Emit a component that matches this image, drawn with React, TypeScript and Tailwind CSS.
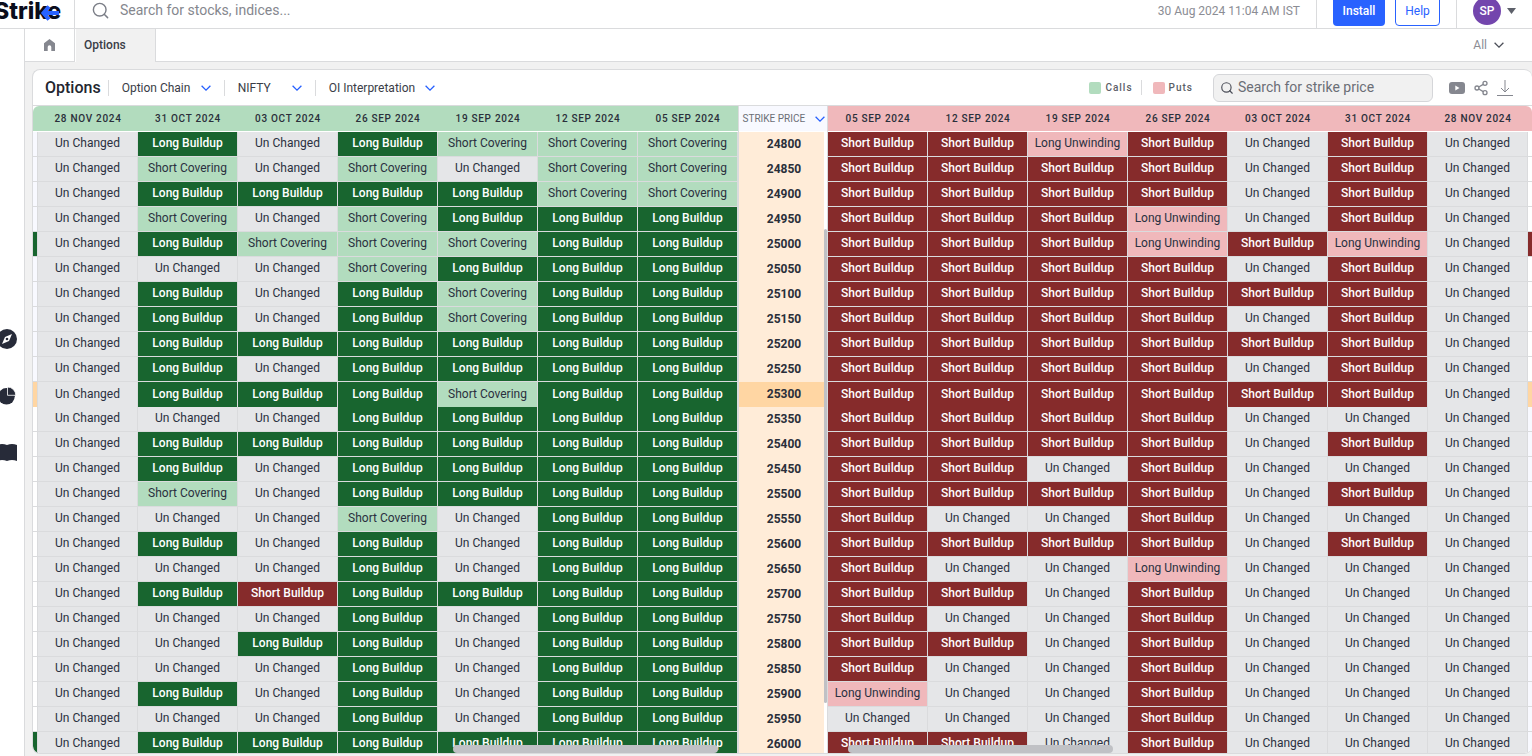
import { useState } from "react";
import { Search, Share2 } from "lucide-react";

type Side = "calls" | "puts";

const LABELS: Record<string, string> = {
  U: "Un Changed",
  L: "Long Buildup",
  S: "Short Buildup",
  C: "Short Covering",
  W: "Long Unwinding",
  _: "",
};

// the outermost expiry is scrolled away, only its edge shows
const CALL_DATES = ["", "28 NOV 2024", "31 OCT 2024", "03 OCT 2024", "26 SEP 2024", "19 SEP 2024", "12 SEP 2024", "05 SEP 2024"];
const PUT_DATES = [...CALL_DATES].reverse();

const ATM = 25300;

// one letter per expiry, see LABELS
const ROWS: { strike: number; calls: string; puts: string }[] = [
  { strike: 24800, calls: "_ULULCCC", puts: "SSWSUSU_" },
  { strike: 24850, calls: "_UCUCUCC", puts: "SSSSUSU_" },
  { strike: 24900, calls: "_ULLLLCC", puts: "SSSSUSU_" },
  { strike: 24950, calls: "_UCUCLLL", puts: "SSSWUSU_" },
  { strike: 25000, calls: "LULCCCLL", puts: "SSSWSWUS" },
  { strike: 25050, calls: "_UUUCLLL", puts: "SSSSUSU_" },
  { strike: 25100, calls: "_ULULCLL", puts: "SSSSSSU_" },
  { strike: 25150, calls: "_ULULCLL", puts: "SSSSUSU_" },
  { strike: 25200, calls: "_ULLLLLL", puts: "SSSSSSU_" },
  { strike: 25250, calls: "_ULULLLL", puts: "SSSSUSU_" },
  { strike: 25300, calls: "_ULLLCLL", puts: "SSSSSSU_" },
  { strike: 25350, calls: "_UUULLLL", puts: "SSSSUUU_" },
  { strike: 25400, calls: "_ULLLLLL", puts: "SSSSUSU_" },
  { strike: 25450, calls: "_ULULLLL", puts: "SSUSUUU_" },
  { strike: 25500, calls: "_UCULLLL", puts: "SSSSUSU_" },
  { strike: 25550, calls: "_UUUCULL", puts: "SUUSUUU_" },
  { strike: 25600, calls: "_ULULULL", puts: "SSSSUSU_" },
  { strike: 25650, calls: "_UUULULL", puts: "SUUWUUU_" },
  { strike: 25700, calls: "_ULSLLLL", puts: "SSUSUUU_" },
  { strike: 25750, calls: "_UUULULL", puts: "SUUSUUU_" },
  { strike: 25800, calls: "_UULLULL", puts: "SSUSUUU_" },
  { strike: 25850, calls: "_UUULULL", puts: "SUUSUUU_" },
  { strike: 25900, calls: "_ULULULL", puts: "WUUSUUU_" },
  { strike: 25950, calls: "_UUULULL", puts: "UUUSUUU_" },
  { strike: 26000, calls: "LULLLLLL", puts: "SSUSUUU_" },
];

function cellColor(code: string, strike: number, side: Side) {
  if (code === "L") return "bg-[#18652f] text-white font-medium";
  if (code === "S") return "bg-[#862b2b] text-white font-medium";
  if (code === "C") return "bg-[#b2dcbe] text-[#2a3040]";
  if (code === "W") return "bg-[#f0b8bb] text-[#2a3040]";
  if (code === "U") return "bg-[#e5e6e8] text-[#2a3040]";
  if (strike === ATM) return "bg-[#ffd6a3]";
  const itm = side === "calls" ? strike < ATM : strike > ATM;
  return itm ? "bg-[#f8f9ff]" : "bg-white";
}

function Chevron({ className }: { className: string }) {
  return (
    <svg width="10" height="6" viewBox="0 0 10 6" fill="none" stroke="currentColor" strokeWidth="1.300" className={`shrink-0 ${className}`}>
      <path d="M.6.7L5 5.100 9.400.7" />
    </svg>
  );
}

function OptionTable({ side }: { side: Side }) {
  const dates = side === "calls" ? CALL_DATES : PUT_DATES;
  const head = side === "calls" ? "bg-[#b2dcbe]" : "bg-[#f0b8bb]";
  return (
    <div className={`relative flex min-w-0 flex-1 overflow-hidden ${side === "calls" ? "justify-end rounded-l-md" : "justify-start rounded-tr-md"}`}>
      <table className="w-[800px] shrink-0 table-fixed border-separate border-spacing-0 self-start text-center">
        <thead>
          <tr>
            {dates.map((d, i) => (
              <th key={i} className={`h-[26px] border-b border-white p-0 pl-px text-[10px] font-medium leading-4 tracking-[0.07em] text-[#2a2f3a] ${head}`}>
                {d}
              </th>
            ))}
          </tr>
        </thead>
        <tbody>
          {ROWS.map((row) => (
            <tr key={row.strike}>
              {row[side].split("").map((code, i) => (
                <td
                  key={i}
                  className={`h-[25px] border-r border-[#dadbdd] p-0 pb-0.5 pl-px text-[12px] leading-4 ${row.strike === ATM ? "" : "border-b"} ${cellColor(code, row.strike, side)}`}
                >
                  {dates[i] && LABELS[code]}
                </td>
              ))}
            </tr>
          ))}
        </tbody>
      </table>
      <div className={`absolute bottom-0 h-2 w-[265px] rounded-full bg-[#c0c1c5] ${side === "calls" ? "right-5" : "left-5"}`} />
    </div>
  );
}

function StrikeColumn() {
  return (
    <div className="relative w-[90px] shrink-0 overflow-hidden border-x border-[#dadbdd] bg-white">
      <table className="w-full table-fixed border-separate border-spacing-0 text-center">
        <thead>
          <tr>
            <th className="h-[26px] border-b border-white bg-[#f8f9ff] p-0 font-normal">
              <button className="flex w-full items-center justify-between pl-1 pr-0.5 text-[10px] leading-4 text-[#6b6e76]">
                STRIKE PRICE
                <Chevron className="text-[#2962ff]" />
              </button>
            </th>
          </tr>
        </thead>
        <tbody>
          {ROWS.map(({ strike }) => (
            <tr key={strike}>
              <td className="h-[25px] p-0 pr-[3px]">
                <div className={`h-[25px] pl-1.5 text-[12px] font-bold leading-6 text-[#2a2f3a] ${strike === ATM ? "bg-[#ffd6a3]" : "bg-[#ffecd8]"}`}>
                  {strike}
                </div>
              </td>
            </tr>
          ))}
        </tbody>
      </table>
      <div className="absolute right-0 top-[123px] h-[474px] w-[3px] rounded-full bg-[#c0c1c5]" />
    </div>
  );
}

function Logo() {
  return (
    <a href="#" aria-label="Strike" className="flex w-[75px] shrink-0 items-center self-stretch overflow-hidden border-r border-[#dadbdd]">
      <svg width="66" height="30" viewBox="0 0 66 30" className="shrink-0">
        <text x="-6" y="23" fontFamily="Inter" fontSize="23" fontWeight="800" fill="#0b0d1c">
          Strike
        </text>
        <path d="M44 17h15M49 10.500L43.500 17l5.500 6.500" fill="none" stroke="#2962ff" strokeWidth="4" />
      </svg>
    </a>
  );
}

function Header() {
  return (
    <header className="-mt-1.5 flex h-[35px] shrink-0 items-center border-b border-[#dadbdd] bg-white">
      <Logo />
      <label className="flex flex-1 items-center gap-2.5 pb-0.5 pl-4">
        <Search className="size-[19px] text-[#7b7e87]" strokeWidth={1.8} />
        <input className="w-80 text-[14px] leading-5 outline-none placeholder:text-[#85878e]" aria-label="Search" placeholder="Search for stocks, indices..." />
      </label>
      <span className="pr-4 text-[12px] text-[#8b8d94]">30 Aug 2024 11:04 AM IST</span>
      <div className="flex items-center gap-2.5 self-stretch border-x border-[#dadbdd] px-4">
        <button className="h-[30px] w-[52px] rounded bg-[#2962ff] text-[12px] font-medium text-white">Install</button>
        <button className="h-[30px] w-[45px] rounded border border-[#2962ff] text-[12px] text-[#2962ff]">Help</button>
      </div>
      <button className="flex items-center gap-1.5 pl-4 pr-4">
        <span className="flex size-7 items-center justify-center rounded-full bg-[#7346ad] text-[12px] font-medium text-white">SP</span>
        <svg width="9" height="6" viewBox="0 0 9 6" fill="#5d606a">
          <path d="M0 0h9L4.500 6z" />
        </svg>
      </button>
    </header>
  );
}

function Sidebar() {
  return (
    <nav className="flex w-[25px] shrink-0 flex-col gap-[37px] overflow-hidden border-r border-[#dadbdd] bg-white pt-[300px]">
      <a href="#" aria-label="Explore" className="-ml-[3px]">
        <svg width="20" height="20" viewBox="0 0 20 20">
          <circle cx="10" cy="10" r="10" fill="#272b39" />
          <path d="M15 5l-3 7-7 3 3-7z" fill="#fff" />
          <circle cx="10" cy="10" r="1.300" fill="#272b39" />
        </svg>
      </a>
      <a href="#" aria-label="Portfolio" className="-ml-[3px]">
        <svg width="20" height="20" viewBox="0 0 20 20" fill="#272b39">
          <circle cx="9.500" cy="10.300" r="8.300" />
          <path d="M10.500 1A8.300 8.300 0 0 1 18.800 9.300H10.500z" stroke="#fff" strokeWidth="0.800" />
        </svg>
      </a>
      <a href="#" aria-label="Learn" className="-ml-[3px]">
        <svg width="20" height="20" viewBox="0 0 20 20" fill="#272b39">
          <path d="M0 2Q5 0 10 2Q15 0 20 2V18Q15 16 10 18Q5 16 0 18z" />
        </svg>
      </a>
    </nav>
  );
}

function TabBar() {
  return (
    <div className="flex h-[33px] shrink-0 bg-white">
      <a href="#" aria-label="Home" className="flex w-[50px] items-center justify-center border-b border-r border-[#dadbdd]">
        <svg width="11" height="12" viewBox="0 0 11 12" fill="#85878f">
          <path d="M5.500 0L11 4.300V12H7.300V8a1.800 1.800 0 0 0-3.600 0v4H0V4.300z" />
        </svg>
      </a>
      <button className="ml-px w-20 border-r border-[#dadbdd] bg-[#f1f1f1] pb-0.5 pl-2 text-left text-[12px] font-medium text-[#3a3d47]">Options</button>
      <div className="flex flex-1 items-center justify-end border-b border-[#dadbdd] pr-7">
        <button className="flex items-center gap-[7px] text-[12px] text-[#8b8d94]">
          All
          <Chevron className="text-[#4c4f59]" />
        </button>
      </div>
    </div>
  );
}

function Dropdown({ label, width }: { label: string; width: string }) {
  return (
    <button className={`flex h-4 items-center justify-between border-l border-[#dadbdd] pl-[13px] text-[12px] text-[#3a3d47] ${width}`}>
      {label}
      <Chevron className="text-[#2962ff]" />
    </button>
  );
}

function Toolbar() {
  const [query, setQuery] = useState("");
  return (
    <div className="flex h-9 shrink-0 items-center border-b border-[#dadbdd] pl-3 pr-[19px]">
      <h1 className="mr-[7px] text-[16px] font-medium text-[#23262f]">Options</h1>
      <div className="flex gap-[13px]">
        <Dropdown label="Option Chain" width="w-[103px]" />
        <Dropdown label="NIFTY" width="w-[78px]" />
        <Dropdown label="OI Interpretation" width="w-[120px]" />
      </div>
      <div className="ml-auto flex items-center text-[10px] font-medium tracking-[1px] text-[#5b5e67]">
        <span className="flex items-center gap-1 pr-2">
          <i className="size-3 rounded-xs bg-[#b2dcbe]" />
          Calls
        </span>
        <span className="flex items-center gap-1 border-l border-[#dadbdd] pl-[11px]">
          <i className="size-3 rounded-xs bg-[#f0b8bb]" />
          Puts
        </span>
      </div>
      <label className="ml-5 flex h-7 w-[220px] items-center gap-1 rounded-md border border-[#d5d6d9] bg-[#f1f1f1] pl-1.5">
        <Search className="size-3.5 shrink-0 text-[#4c4f59]" />
        <input
          className="w-full min-w-0 pb-0.5 text-[14px] leading-5 outline-none placeholder:text-[#6b6e76]"
          placeholder="Search for strike price"
          aria-label="Search for strike price"
          value={query}
          onChange={(e) => setQuery(e.target.value)}
        />
      </label>
      <div className="ml-4 flex items-center gap-2 text-[#85878f]">
        <button aria-label="Watch video">
          <svg width="16" height="12" viewBox="0 0 16 12">
            <rect width="16" height="12" rx="3" fill="#85878f" />
            <path d="M6.300 3.500v5L10.500 6z" fill="#fff" />
          </svg>
        </button>
        <button aria-label="Share">
          <Share2 className="size-4" />
        </button>
        <button aria-label="Download">
          <svg width="16" height="16" viewBox="0 0 16 16" fill="none" stroke="#85878f">
            <path d="M8 0v12M4 8l4 4 4-4M0 15.500h16" />
          </svg>
        </button>
      </div>
    </div>
  );
}

export default function App() {
  return (
    <div className="flex h-screen flex-col overflow-hidden bg-[#f1f1f1] font-[Roboto,sans-serif]">
      <Header />
      <div className="flex min-h-0 flex-1">
        <Sidebar />
        <main className="flex min-w-0 flex-1 flex-col">
          <TabBar />
          <section className="mb-0.5 ml-[7px] mt-[7px] flex min-h-0 flex-1 flex-col overflow-hidden rounded-lg border border-r-0 border-[#dadbdd] bg-white">
            <Toolbar />
            <div className="flex min-h-0 flex-1">
              <OptionTable side="calls" />
              <StrikeColumn />
              <OptionTable side="puts" />
            </div>
          </section>
        </main>
      </div>
    </div>
  );
}
